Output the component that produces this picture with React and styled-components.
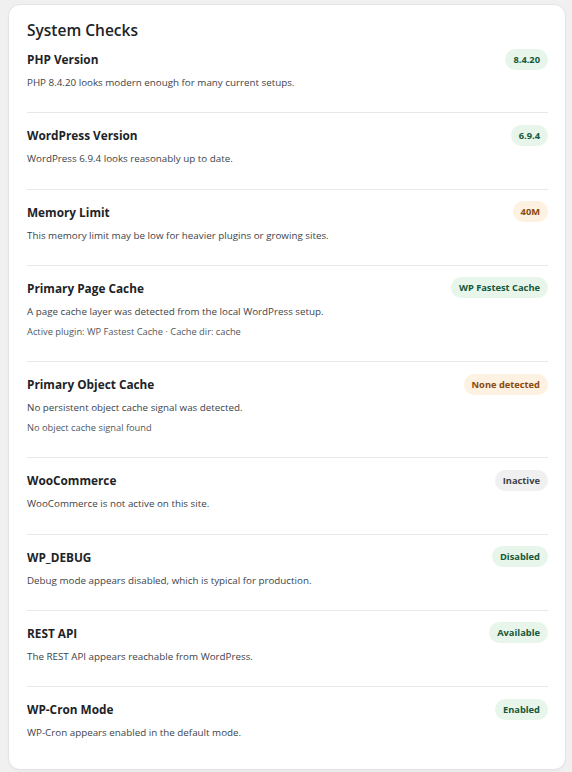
import React from 'react';
import styled, { createGlobalStyle } from 'styled-components';

const GlobalStyle = createGlobalStyle`
  body {
    margin: 0;
    background: #f0f0f1;
    font-family: "Open Sans", "Noto Sans", sans-serif;
    color: #1d2327;
  }
`;

const Page = styled.div`
  padding: 4px 6px 4px 8px;
`;

const Card = styled.section`
  background: #fff;
  border: 1px solid #e2e4e7;
  border-radius: 12px;
  box-shadow: 0 1px 2px rgba(0, 0, 0, 0.04);
  padding: 14px 17px 7px 18px;
`;

const Heading = styled.h2`
  margin: 0 0 7px;
  font-size: 15.5px;
  font-weight: 600;
  line-height: 22px;
  color: #1d2327;
`;

const Row = styled.div`
  padding: 11px 0 22.25px;
  border-top: 1px solid #e8e8e8;
  ${(p) => p.first && 'border-top: none; padding-top: 0;'}
`;

const Head = styled.div`
  display: flex;
  align-items: center;
  justify-content: space-between;
  min-height: 22px;
`;

const Label = styled.h3`
  margin: 0;
  font-size: 11.8px;
  font-weight: 700;
  color: #1d2327;
`;

const Badge = styled.span`
  display: inline-flex;
  align-items: center;
  height: 21px;
  padding: 0 8px;
  border-radius: 11px;
  font-size: 9.3px;
  font-weight: 700;
  background: ${(p) =>
    p.tone === 'warn' ? '#fdf1e1' : p.tone === 'muted' ? '#f0f0f1' : '#e7f5ea'};
  color: ${(p) =>
    p.tone === 'warn' ? '#8a4a0b' : p.tone === 'muted' ? '#3c434a' : '#15583a'};
`;

const Desc = styled.p`
  margin: 6px 0 0;
  font-size: 9.8px;
  line-height: 14px;
  color: #3c434a;
`;

const Meta = styled.p`
  margin: 6px 0 0;
  font-size: 9.3px;
  line-height: 14px;
  color: #50575e;
`;

const checks = [
  { label: 'PHP Version', badge: '8.4.20', desc: 'PHP 8.4.20 looks modern enough for many current setups.' },
  { label: 'WordPress Version', badge: '6.9.4', desc: 'WordPress 6.9.4 looks reasonably up to date.' },
  { label: 'Memory Limit', badge: '40M', tone: 'warn', desc: 'This memory limit may be low for heavier plugins or growing sites.' },
  {
    label: 'Primary Page Cache',
    badge: 'WP Fastest Cache',
    desc: 'A page cache layer was detected from the local WordPress setup.',
    meta: 'Active plugin: WP Fastest Cache · Cache dir: cache',
  },
  {
    label: 'Primary Object Cache',
    badge: 'None detected',
    tone: 'warn',
    desc: 'No persistent object cache signal was detected.',
    meta: 'No object cache signal found',
  },
  { label: 'WooCommerce', badge: 'Inactive', tone: 'muted', desc: 'WooCommerce is not active on this site.' },
  { label: 'WP_DEBUG', badge: 'Disabled', desc: 'Debug mode appears disabled, which is typical for production.' },
  { label: 'REST API', badge: 'Available', desc: 'The REST API appears reachable from WordPress.' },
  { label: 'WP-Cron Mode', badge: 'Enabled', desc: 'WP-Cron appears enabled in the default mode.' },
];

const App = () => {
  return (
    <Page>
      <GlobalStyle />
      <Card>
        <Heading>System Checks</Heading>
        {checks.map((c, i) => (
          <Row key={c.label} first={i === 0}>
            <Head>
              <Label>{c.label}</Label>
              <Badge tone={c.tone}>{c.badge}</Badge>
            </Head>
            <Desc>{c.desc}</Desc>
            {c.meta && <Meta>{c.meta}</Meta>}
          </Row>
        ))}
      </Card>
    </Page>
  );
};

export default App;
